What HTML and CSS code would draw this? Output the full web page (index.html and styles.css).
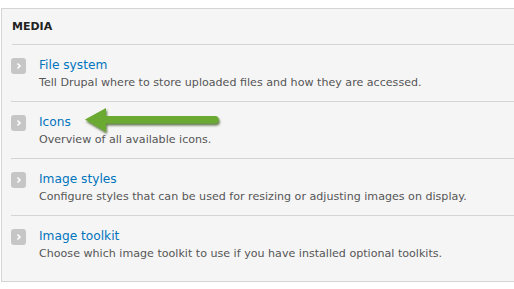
FILE: index.html
```html
<!DOCTYPE html>
<html lang="en">
<head>
    <meta charset="UTF-8">
    <title>Media</title>
    <link rel="stylesheet" href="styles.css">
</head>
<body>

<div class="panel">
    <h3 class="panel-title">MEDIA</h3>

    <ul class="admin-list">
        <li>
            <span class="expander"><svg width="15" height="16" viewBox="0 0 15 16"><path d="M6.5 5.5 L9 8 L6.5 10.5" fill="none" stroke="#fff" stroke-width="1.6"/></svg></span>
            <div>
                <a href="#" class="item-title">File system</a>
                <p class="item-desc">Tell Drupal where to store uploaded files and how they are accessed.</p>
            </div>
        </li>
        <li>
            <span class="expander"><svg width="15" height="16" viewBox="0 0 15 16"><path d="M6.5 5.5 L9 8 L6.5 10.5" fill="none" stroke="#fff" stroke-width="1.6"/></svg></span>
            <div>
                <a href="#" class="item-title">Icons</a>
                <p class="item-desc">Overview of all available icons.</p>
            </div>
        </li>
        <li>
            <span class="expander"><svg width="15" height="16" viewBox="0 0 15 16"><path d="M6.5 5.5 L9 8 L6.5 10.5" fill="none" stroke="#fff" stroke-width="1.6"/></svg></span>
            <div>
                <a href="#" class="item-title">Image styles</a>
                <p class="item-desc">Configure styles that can be used for resizing or adjusting images on display.</p>
            </div>
        </li>
        <li>
            <span class="expander"><svg width="15" height="16" viewBox="0 0 15 16"><path d="M6.5 5.5 L9 8 L6.5 10.5" fill="none" stroke="#fff" stroke-width="1.6"/></svg></span>
            <div>
                <a href="#" class="item-title">Image toolkit</a>
                <p class="item-desc">Choose which image toolkit to use if you have installed optional toolkits.</p>
            </div>
        </li>
    </ul>

    <!-- pointer arrow over the Icons row -->
    <svg class="pointer" width="140" height="30" viewBox="0 0 140 30">
        <defs>
            <filter id="shadow" x="-10%" y="-30%" width="120%" height="170%">
                <feGaussianBlur in="SourceAlpha" stdDeviation="1.2"/>
                <feOffset dx="1" dy="2" result="blur"/>
                <feFlood flood-color="#2f4a14" flood-opacity="0.75"/>
                <feComposite in2="blur" operator="in"/>
                <feMerge><feMergeNode/><feMergeNode in="SourceGraphic"/></feMerge>
            </filter>
        </defs>
        <path d="M1 12.5 L22 1 L22 9 L131 9 A3.8 3.8 0 0 1 131 16.6 L22 16.6 L22 25 Z" fill="#6aaa30" filter="url(#shadow)"/>
    </svg>
</div>

</body>
</html>
```

FILE: styles.css
```css
body {
    margin: 0;
    background-color: #fff;
    font-family: 'DejaVu Sans', Verdana, sans-serif;
    color: #333;
}
.panel {
    position: relative;
    margin: 8px 0 0 1px;
    height: 272px;
    background-color: #f5f5f5;
    border: 1px solid #d4d4d4;
    border-right: none;
}
.panel-title {
    margin: 0 0 0 10px;
    height: 35px;
    line-height: 35px;
    font-size: 11px;
    font-weight: bold;
    color: #222;
    border-bottom: 1px solid #d4d4d4;
}
.admin-list {
    list-style: none;
    margin: 0 0 0 9px;
    padding: 0;
}
.admin-list li {
    display: flex;
    gap: 13px;
    padding: 11px 0 9px;
    border-bottom: 1px solid #d4d4d4;
}
.admin-list li:last-child {
    border-bottom: none;
}
.expander {
    flex: none;
    width: 15px;
    height: 16px;
    margin-top: 2px;
    background-color: #c6c6c6;
    border-radius: 3px;
}
.expander svg {
    display: block;
}
.item-title {
    display: block;
    line-height: 18px;
    font-size: 12.2px;
    color: #0074bd;
    text-decoration: none;
}
.item-desc {
    margin: 0;
    line-height: 18px;
    font-size: 11.1px;
    color: #555;
}
.pointer {
    position: absolute;
    left: 82px;
    top: 98px;
}
```
